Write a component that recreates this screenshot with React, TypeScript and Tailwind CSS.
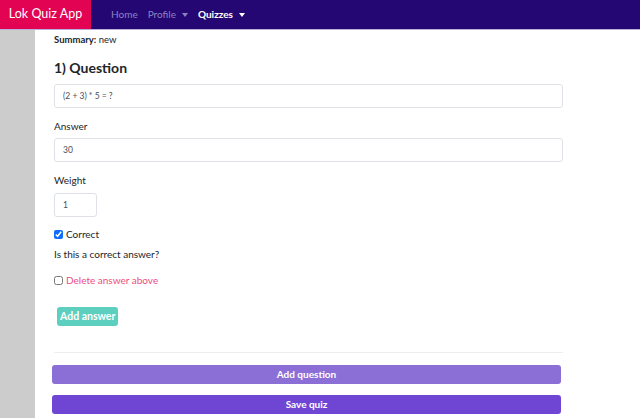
function Caret() {
  return <span className="ml-[6px] inline-block h-0 w-0 border-x-[3.5px] border-t-[4px] border-x-transparent border-t-current align-middle" />
}

export default function App() {
  return (
    <div className="flex h-[418px] w-[640px] flex-col overflow-hidden bg-white font-['Lato',sans-serif] text-[#212529]">
      {/* Navbar */}
      <nav className="flex h-[30px] shrink-0 items-stretch border-b border-[#b9b0d9] bg-[#240772]">
        <div className="flex w-[91px] items-center justify-center bg-[#e20352] text-[12.5px] text-white">Lok Quiz App</div>
        <div className="flex items-center gap-[10px] pl-[20px] text-[10px]">
          <span className="text-[#8c82c3]">Home</span>
          <span className="flex items-center text-[#8c82c3]">
            Profile
            <Caret />
          </span>
          <span className="flex items-center font-bold text-white">
            Quizzes
            <Caret />
          </span>
        </div>
      </nav>

      <div className="flex flex-1">
        {/* Sidebar */}
        <div className="w-[35px] shrink-0 bg-[#cccccc]" />

        {/* Content */}
        <div className="flex w-[530px] flex-col pl-[17px] pt-[3px]">
          <div className="pl-[2px] text-[9.5px] leading-[14px]">
            <span className="font-bold">Summary:</span> new
          </div>

          <h2 className="mt-[11px] pl-[2px] text-[14px] font-bold leading-[20px]">1) Question</h2>
          <div className="ml-[2px] mt-[6px] flex h-[24px] w-[509px] items-center rounded-[3px] border border-[#dee2e6] px-[8px] text-[8.5px] text-[#495057]">
            (2 + 3) * 5 = ?
          </div>

          <label className="mt-[10px] pl-[2px] text-[10px] leading-[16px]">Answer</label>
          <div className="ml-[2px] mt-[4px] flex h-[24px] w-[509px] items-center rounded-[3px] border border-[#dee2e6] px-[8px] text-[8.5px] text-[#495057]">
            30
          </div>

          <label className="mt-[10px] pl-[2px] text-[10px] leading-[16px]">Weight</label>
          <div className="ml-[2px] mt-[5px] flex h-[24px] w-[43px] items-center rounded-[3px] border border-[#dee2e6] px-[8px] text-[8.5px] text-[#495057]">
            1
          </div>

          <div className="mt-[9px] flex items-center gap-[3px] pl-[2px] text-[10px] leading-[16px]">
            <input type="checkbox" defaultChecked className="m-0 h-[9px] w-[9px] accent-[#0d6efd]" />
            <span>Correct</span>
          </div>
          <div className="mt-[4px] pl-[2px] text-[10px] leading-[16px]">Is this a correct answer?</div>

          <div className="mt-[10px] flex items-center gap-[3px] pl-[2px] text-[10px] leading-[16px] text-[#ec4d83]">
            <input type="checkbox" className="m-0 h-[9px] w-[9px]" />
            <span>Delete answer above</span>
          </div>

          <div className="mt-[19px] flex pl-[5px]">
            <button className="h-[19px] rounded-[3px] bg-[#5dcfbf] px-[3px] text-[10.5px] font-bold leading-[19px] text-white">Add answer</button>
          </div>

          <div className="ml-[2px] mt-[26px] h-px w-[509px] bg-[#eeeeee]" />

          <button className="mt-[12px] h-[19px] w-[509px] rounded-[3px] bg-[#8b6ed6] text-[10px] font-bold leading-[19px] text-white">Add question</button>
          <button className="mt-[11px] h-[19px] w-[509px] rounded-[3px] bg-[#6f46d4] text-[10px] font-bold leading-[19px] text-white">Save quiz</button>
        </div>
      </div>
    </div>
  )
}
